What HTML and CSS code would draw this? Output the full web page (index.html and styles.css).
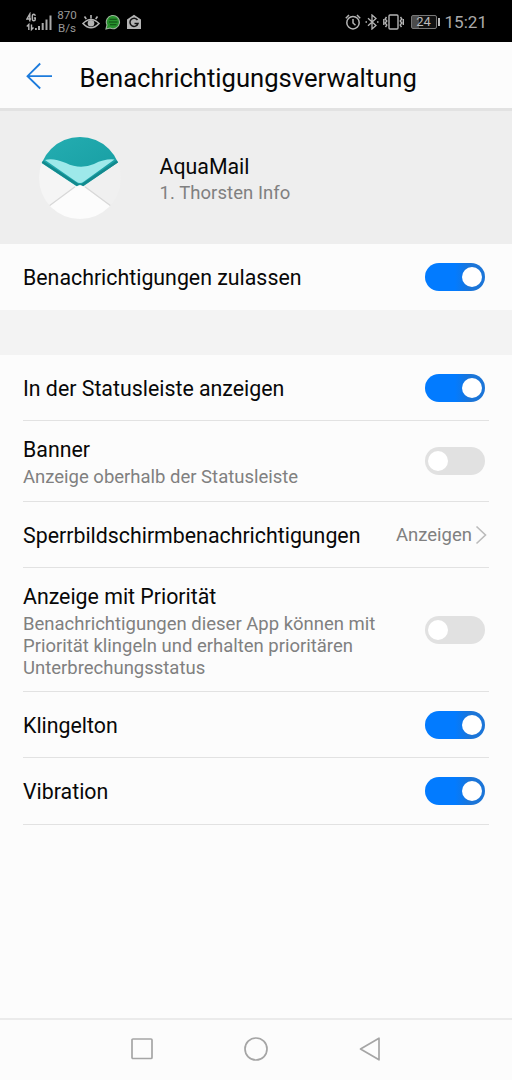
FILE: index.html
```html
<!DOCTYPE html>
<html lang="de">
<head>
<meta charset="utf-8">
<title>Benachrichtigungsverwaltung</title>
<link rel="stylesheet" href="styles.css">
</head>
<body>
<div class="screen">
  <div class="status">
    <svg class="signal" width="27" height="20" viewBox="0 0 27 20" fill="#aaa">
      <path d="M3.800 9.500V2L1 7h4M9.300 3.800Q8.900 2.200 7.800 2.200Q6.300 2.200 6.300 4.500V6.500Q6.300 8.800 7.800 8.800Q9.300 8.800 9.300 7V6H7.800" fill="none" stroke="#b4b4b4" stroke-width="1.400"/>
      <path d="M2.800 18V12.500L.8 14.500M5.500 12.500V17.500L7.500 15.500" fill="none" stroke="#b4b4b4" stroke-width="1.400"/>
      <path d="M9 16h1.800v2H9zM12 14h2v4H12zM15.700 11h2v7h-2zM19.500 7.500h2V18h-2zM23.500 3.500h2V18h-2z"/>
    </svg>
    <div class="speed"><span>870</span><span>B/s</span></div>
    <svg class="eye" width="18" height="16" viewBox="0 0 18 16" fill="none" stroke="#b4b4b4" stroke-width="1.600">
      <path d="M1 9.500Q9 1.500 17 9.500Q9 18 1 9.500zM9 4.500V1M4.300 5L2.500 2.500M13.700 5l1.800-2.500"/><circle cx="9" cy="9.300" r="3.300" fill="#b4b4b4" stroke="none"/>
    </svg>
    <svg class="chat" width="16" height="16" viewBox="0 0 16 16">
      <path d="M1 15l1-4A6.600 6.600 0 1 1 5 14z" fill="#27912d" stroke="#9bb59b" stroke-width="1.100"/>
      <path d="M4.500 5.300h7.300M4 8h8.500M5 10.700h6.500" fill="none" stroke="#0c4711" stroke-width="1.100"/>
    </svg>
    <svg class="guard" width="16" height="16" viewBox="0 0 16 16">
      <path d="M1 5.500L8 .8 15 5.500V15H1z" fill="#b4b4b4"/><path d="M11.500 6A4.100 4.100 0 1 0 12 9.500H8.500" fill="none" stroke="#111" stroke-width="1.500"/>
    </svg>
    <div class="spacer"></div>
    <svg class="alarm" width="16" height="16" viewBox="0 0 16 16" fill="none" stroke="#b5b5b5" stroke-width="1.500">
      <circle cx="8" cy="8.700" r="6.200"/><path d="M8 5v4l2.500 2.200M.8 4.200L4 1M15.200 4.200L12 1"/>
    </svg>
    <svg class="bluetooth" width="14" height="16" viewBox="0 0 14 16" fill="none" stroke="#b5b5b5" stroke-width="1.300">
      <path d="M3 4.300l8 7.200L7 15V1l4 3.500L3 11.700M.5 8H2M12 8h1.500"/>
    </svg>
    <svg class="vibrate" width="21" height="16" viewBox="0 0 21 16" fill="none" stroke="#b5b5b5" stroke-width="1.400">
      <rect x="6" y="1" width="9" height="14" rx="1"/><path d="M3.500 3L2.200 5l1.600 2-1.600 2 1.600 2-1.300 2M.8 5v6M17.500 3l1.300 2-1.600 2 1.600 2-1.600 2 1.300 2M20.300 5v6"/>
    </svg>
    <div class="battery"><span>24</span></div>
    <div class="time">15:21</div>
  </div>

  <header class="header">
    <svg width="28" height="28" viewBox="0 0 28 28" fill="none" stroke="#1c7bdc" stroke-width="1.800"><path d="M15.200 1.500L2.500 14.200 15.200 26.500M2.500 14.200H27"/></svg>
    <h1>Benachrichtigungsverwaltung</h1>
  </header>

  <section class="app">
    <svg width="84" height="84" viewBox="0 0 84 84">
      <defs>
        <clipPath id="disc"><circle cx="42" cy="42" r="41"/></clipPath>
        <linearGradient id="teal" x1="0" y1="0" x2="1" y2="1"><stop offset="0" stop-color="#25aeb2"/><stop offset="1" stop-color="#159ba0"/></linearGradient>
      </defs>
      <g clip-path="url(#disc)">
        <path d="M0 25L42 50 12 76H0z" fill="#f5f5f5"/>
        <path d="M84 25L42 50l30 26h12z" fill="#f0f0f0"/>
        <path d="M0 0h84v23.500L42 52.500 0 24.500z" fill="url(#teal)"/>
        <path d="M1 23.500L42 50.500 83 23" fill="none" stroke="#13898d" stroke-width="2.500"/>
        <path d="M7 24Q15 21.500 28 27Q42 34 56 28Q67 22.500 76.500 23.500L46 45.500Q42 48.500 38 45.500z" fill="#9ee9ea"/>
        <path d="M8 73L38.500 50.500Q42 47.500 45.500 50.500L76 73V84H8z" fill="#fcfcfc"/>
        <path d="M11 70L37 50.800M47 50.800L73 70" stroke="#d8d8d8" stroke-width="1.200"/>
      </g>
    </svg>
    <div class="text"><div class="label">AquaMail</div><div class="sub">1. Thorsten Info</div></div>
  </section>

  <main>
    <div class="row master"><div class="label">Benachrichtigungen zulassen</div><div class="switch on"></div></div>
    <div class="gap"></div>
    <div class="list">
      <div class="row"><div class="label">In der Statusleiste anzeigen</div><div class="switch on"></div></div>
      <div class="row banner"><div class="text"><div class="label">Banner</div><div class="sub">Anzeige oberhalb der Statusleiste</div></div><div class="switch"></div></div>
      <div class="row lock"><div class="label">Sperrbildschirmbenachrichtigungen</div><div class="value">Anzeigen<svg width="12" height="20" viewBox="0 0 12 20" fill="none" stroke="#bbb" stroke-width="1.600"><path d="M1.500 1.500L10.500 10l-9 8.500"/></svg></div></div>
      <div class="row priority"><div class="text"><div class="label">Anzeige mit Priorität</div><div class="sub">Benachrichtigungen dieser App können mit<br>Priorität klingeln und erhalten prioritären<br>Unterbrechungsstatus</div></div><div class="switch"></div></div>
      <div class="row"><div class="label">Klingelton</div><div class="switch on"></div></div>
      <div class="row last"><div class="label">Vibration</div><div class="switch on"></div></div>
    </div>
  </main>

  <nav class="nav">
    <svg width="24" height="24" viewBox="0 0 24 24"><rect x="2" y="2" width="20" height="19.500" rx="1"/></svg>
    <svg width="24" height="24" viewBox="0 0 24 24"><circle cx="12" cy="12" r="11"/></svg>
    <svg width="24" height="24" viewBox="0 0 24 24"><path d="M2.500 12L21 1.200V22.800z"/></svg>
  </nav>
</div>
</body>
</html>
```
FILE: styles.css
```css
* { box-sizing: border-box; }
body { margin: 0; background: #fcfcfc; font-family: Roboto, sans-serif; color: #080808; }
svg { display: block; flex: none; }
.screen { width: 512px; height: 1080px; display: flex; flex-direction: column; overflow: hidden; }
.status { height: 42px; flex: none; background: #000; color: #aaa; display: flex; align-items: center; padding: 1px 25px 0 26px; }
.speed { display: flex; flex-direction: column; align-items: center; font-size: 11.6px; line-height: 13px; color: #999; margin: 0 5px 0 4px; width: 20px; }
.chat { margin-left: 5px; }
.guard { margin-left: 5px; }
.spacer { flex: 1; }
.bluetooth { margin-left: 4px; }
.vibrate { margin-left: 4px; }
.battery { position: relative; width: 26px; height: 14px; margin-left: 7px; border: 1px solid #777; border-radius: 2px; background: linear-gradient(90deg, #4b4b4b 7px, #111 7px); font-size: 13px; line-height: 12px; text-align: center; color: #bbb; }
.battery::after { content: ""; position: absolute; left: 26px; top: 2px; width: 2px; height: 8px; background: #bbb; }
.time { font-size: 17.07px; margin-left: 8px; color: #aaa; }
.header { height: 69px; flex: none; display: flex; align-items: center; padding: 2px 0 0 25px; border-bottom: 3px solid #e2e2e2; }
.header h1 { font-size: 25.6px; font-weight: 400; line-height: 30px; margin: 4px 0 0 26.5px; }
.app { height: 133px; flex: none; background: #eee; display: flex; align-items: center; padding-left: 38px; }
.app .text { margin-left: 37.5px; padding-top: 3px; }
.label { font-size: 21.33px; line-height: 26px; white-space: nowrap; }
.sub { font-size: 18.49px; line-height: 22px; color: #808080; margin-top: 3px; white-space: nowrap; }
.app .sub { margin-top: 2px; letter-spacing: 0.06px; }
.row { height: 66px; display: flex; align-items: center; justify-content: space-between; border-bottom: 1px solid #e2e2e2; padding-right: 4px; }
.row > .label, .row > .text { padding-top: 2px; }
.row.master { padding: 0 27px 0 23px; border: 0; }
.gap { height: 45px; background: #f3f3f3; }
.list { padding: 0 23px; }
.row.banner { height: 81px; }
.row.lock { padding-right: 2px; }
.row.priority { height: 124px; }
.row.priority > .text { padding-top: 3px; }
.row.last { height: 67px; }
.value { display: flex; align-items: center; font-size: 18.49px; color: #808080; gap: 3px; }
.switch { flex: none; width: 60px; height: 28px; border-radius: 14px; background: #e1e1e1; display: flex; align-items: center; padding: 0 3px; }
.switch::before { content: ""; width: 20px; height: 20px; border-radius: 50%; background: #fff; }
.switch.on { background: linear-gradient(90deg, #027bff 50%, #1b75d8 75%); justify-content: flex-end; }
.nav { height: 62px; margin-top: auto; flex: none; border-top: 2px solid #ebebeb; padding-bottom: 2px; display: flex; justify-content: center; align-items: center; gap: 90px; }
.nav svg { fill: none; stroke: #a5a5a5; stroke-width: 1.7; stroke-linejoin: round; }
```
